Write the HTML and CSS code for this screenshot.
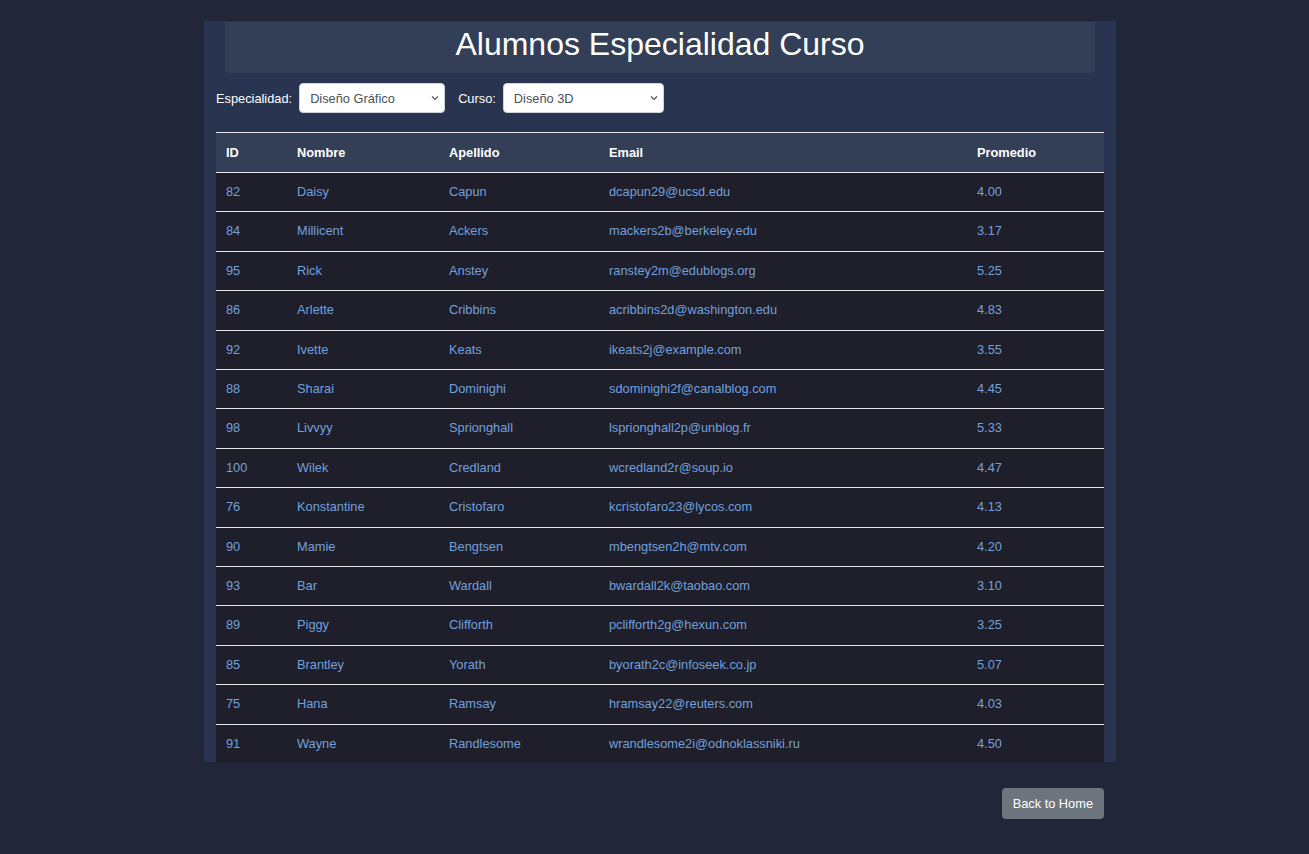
FILE: index.html
```html
<!DOCTYPE html>
<html lang="es">
<head>
<meta charset="utf-8">
<title>Alumnos Especialidad Curso</title>
<link rel="stylesheet" href="styles.css">
</head>
<body>
<main class="panel">
  <header class="banner">
    <h1 class="title">Alumnos Especialidad Curso</h1>
  </header>
  <div class="filters">
    <label class="filter-label" for="esp">Especialidad:</label>
    <select id="esp" class="select select-esp"><option>Diseño Gráfico</option></select>
    <label class="filter-label" for="cur">Curso:</label>
    <select id="cur" class="select select-cur"><option>Diseño 3D</option></select>
  </div>
  <div class="table-wrap">
    <table class="grid">
      <colgroup>
        <col class="c-id"><col class="c-nombre"><col class="c-apellido"><col class="c-email"><col class="c-prom">
      </colgroup>
      <thead>
        <tr><th>ID</th><th>Nombre</th><th>Apellido</th><th>Email</th><th>Promedio</th></tr>
      </thead>
      <tbody>
        <tr><td>82</td><td>Daisy</td><td>Capun</td><td>dcapun29@ucsd.edu</td><td>4.00</td></tr>
        <tr><td>84</td><td>Millicent</td><td>Ackers</td><td>mackers2b@berkeley.edu</td><td>3.17</td></tr>
        <tr><td>95</td><td>Rick</td><td>Anstey</td><td>ranstey2m@edublogs.org</td><td>5.25</td></tr>
        <tr><td>86</td><td>Arlette</td><td>Cribbins</td><td>acribbins2d@washington.edu</td><td>4.83</td></tr>
        <tr><td>92</td><td>Ivette</td><td>Keats</td><td>ikeats2j@example.com</td><td>3.55</td></tr>
        <tr><td>88</td><td>Sharai</td><td>Dominighi</td><td>sdominighi2f@canalblog.com</td><td>4.45</td></tr>
        <tr><td>98</td><td>Livvyy</td><td>Sprionghall</td><td>lsprionghall2p@unblog.fr</td><td>5.33</td></tr>
        <tr><td>100</td><td>Wilek</td><td>Credland</td><td>wcredland2r@soup.io</td><td>4.47</td></tr>
        <tr><td>76</td><td>Konstantine</td><td>Cristofaro</td><td>kcristofaro23@lycos.com</td><td>4.13</td></tr>
        <tr><td>90</td><td>Mamie</td><td>Bengtsen</td><td>mbengtsen2h@mtv.com</td><td>4.20</td></tr>
        <tr><td>93</td><td>Bar</td><td>Wardall</td><td>bwardall2k@taobao.com</td><td>3.10</td></tr>
        <tr><td>89</td><td>Piggy</td><td>Clifforth</td><td>pclifforth2g@hexun.com</td><td>3.25</td></tr>
        <tr><td>85</td><td>Brantley</td><td>Yorath</td><td>byorath2c@infoseek.co.jp</td><td>5.07</td></tr>
        <tr><td>75</td><td>Hana</td><td>Ramsay</td><td>hramsay22@reuters.com</td><td>4.03</td></tr>
        <tr><td>91</td><td>Wayne</td><td>Randlesome</td><td>wrandlesome2i@odnoklassniki.ru</td><td>4.50</td></tr>
      </tbody>
    </table>
  </div>
</main>
<div class="actions">
  <button class="btn-back" type="button">Back to Home</button>
</div>
</body>
</html>
```

FILE: styles.css
```css
html, body {
  margin: 0;
  padding: 0;
}
body {
  background: #222639;
  font-family: "Liberation Sans", Arial, sans-serif;
  color: #ffffff;
  font-size: 12.8px;
  padding-top: 21px;
}
.panel {
  width: 912px;
  height: 741px;
  margin: 0 0 0 204px;
  background: #283450;
  overflow: hidden;
  display: flex;
  flex-direction: column;
  box-sizing: border-box;
}
.banner {
  margin: 1px 21px 0;
  height: 51px;
  flex: none;
  background: #333f56;
  border-radius: 0 0 4px 4px;
  display: flex;
  align-items: center;
  justify-content: center;
}
.title {
  margin: 0;
  font-weight: 400;
  font-size: 32px;
  color: #ffffff;
  line-height: 1;
  position: relative;
  top: -4px;
}
.filters {
  display: flex;
  align-items: center;
  padding: 10px 12px 0;
  height: 30px;
  flex: none;
}
.filter-label {
  font-size: 12.8px;
  color: #ffffff;
  margin-right: 7px;
}
.select {
  -webkit-appearance: none;
  appearance: none;
  height: 30px;
  background-color: #ffffff;
  background-image: url("data:image/svg+xml,%3Csvg xmlns='http://www.w3.org/2000/svg' width='8' height='6' viewBox='0 0 8 6'%3E%3Cpath d='M1 1.5l3 3 3-3' fill='none' stroke='%23555' stroke-width='1.2'/%3E%3C/svg%3E");
  background-repeat: no-repeat;
  background-position: right 5px center;
  background-size: 8px 6px;
  border: 1px solid #ced4da;
  border-radius: 4px;
  font-family: "Liberation Sans", Arial, sans-serif;
  font-size: 12.8px;
  color: #495057;
  padding: 0 18px 0 10px;
  margin-right: 13px;
}
.select-esp { width: 146px; }
.select-cur { width: 161px; }
.table-wrap {
  margin: 19px 12px 0;
  flex: none;
}
.grid {
  width: 888px;
  border-collapse: collapse;
  table-layout: fixed;
}
.c-id { width: 71px; }
.c-nombre { width: 152px; }
.c-apellido { width: 160px; }
.c-email { width: 368px; }
.c-prom { width: 137px; }
.grid thead th {
  background: #333f56;
  color: #ffffff;
  font-weight: 700;
  font-size: 12.8px;
  text-align: left;
  padding: 13px 10px 12px;
  line-height: 14px;
  border-top: 1px solid #e6e6ea;
  border-bottom: 1px solid #e6e6ea;
}
.grid tbody td {
  background: #1f1e2b;
  color: #72a1db;
  font-size: 12.8px;
  padding: 12px 10px;
  line-height: 14.4px;
  border-bottom: 1px solid #e6e6ea;
  white-space: nowrap;
}
.actions {
  width: 888px;
  margin: 26px 0 0 216px;
  display: flex;
  justify-content: flex-end;
}
.btn-back {
  background: #6c757d;
  color: #ffffff;
  border: none;
  border-radius: 4px;
  font-family: "Liberation Sans", Arial, sans-serif;
  font-size: 12.8px;
  height: 31px;
  padding: 0 11px;
}
```
